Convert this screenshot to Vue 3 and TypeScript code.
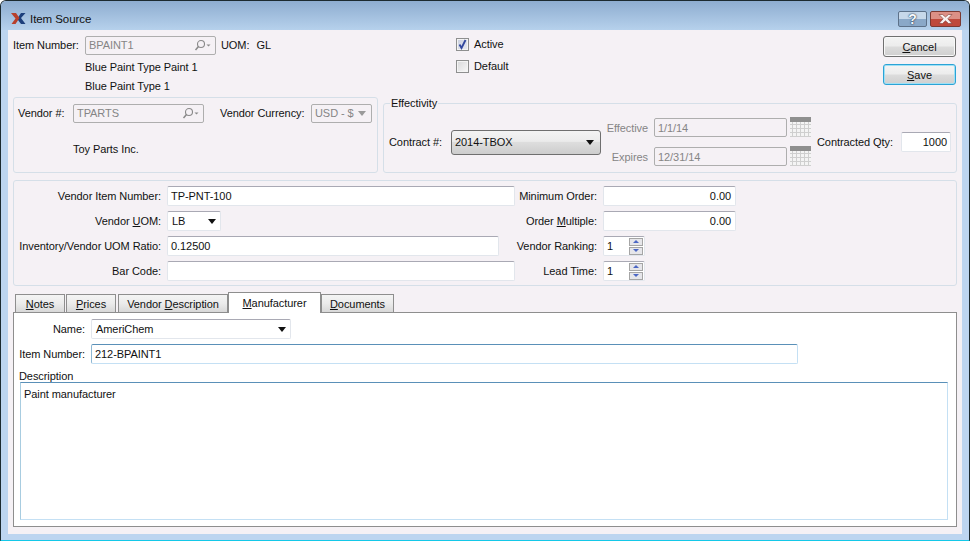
<script setup lang="ts">
const tabs = [
  { pre: '', key: 'N', post: 'otes', w: 50 },
  { pre: '', key: 'P', post: 'rices', w: 50 },
  { pre: 'Vendor ', key: 'D', post: 'escription', w: 110 },
  { pre: '', key: 'M', post: 'anufacturer', w: 93, active: true },
  { pre: '', key: 'D', post: 'ocuments', w: 73 },
]
</script>

<template>
  <div class="window">
    <header class="titlebar">
      <svg class="logo" width="15" height="11" viewBox="0 0 15 11">
        <path d="M7 4.500l3-4.500h4.500l-4.500 5 4.500 6h-4.500l-3-4z" fill="#1d3f7c" />
        <path d="M0 0h5l3.500 5-4 6h-4l4-5.500z" fill="#b8402c" />
      </svg>
      <span class="title">Item Source</span>
      <button class="cap help">?</button>
      <button class="cap close">
        <svg width="15" height="10" viewBox="0 0 15 10"><path d="M1 0.500h3.500l3 2.500 3-2.500h3.500l-4.200 4.300 4.200 4.700h-3.500l-3-2.700-3 2.700h-3.500l4.200-4.700z" fill="#f8f2f2" stroke="#7d3a34" stroke-width="0.600" /></svg>
      </button>
    </header>

    <main class="content">
      <section class="top">
        <div class="item-col">
          <div class="row item-row">
            <label class="lbl-item">Item Number:</label>
            <div class="input disabled lookup w131">
              <span>BPAINT1</span>
              <svg class="search" width="20" height="12" viewBox="0 0 20 12"><circle cx="8" cy="5" r="3.500" fill="none" stroke="#8a8a8a" stroke-width="1.100" /><path d="M5.500 7.500l-3 3.500" stroke="#8a8a8a" stroke-width="1.500" /><path d="M13.500 5.500h4l-2 2z" fill="#8a8a8a" /></svg>
            </div>
            <span class="uom">UOM:</span>
            <span class="uom-v">GL</span>
          </div>
          <div class="desc desc1">Blue Paint Type Paint 1</div>
          <div class="desc desc2">Blue Paint Type 1</div>
        </div>
        <div class="checks">
          <label class="check"><span class="box on"><svg width="11" height="11" viewBox="0 0 11 11"><path d="M2.500 5.500l2 3.500 4-8" fill="none" stroke="#31479e" stroke-width="1.800" /></svg></span>Active</label>
          <label class="check"><span class="box"></span>Default</label>
        </div>
        <div class="actions">
          <button class="btn"><u>C</u>ancel</button>
          <button class="btn default"><u>S</u>ave</button>
        </div>
      </section>

      <section class="second">
        <div class="group vendor">
          <div class="row vendor-row">
            <label class="lbl-vendor">Vendor #:</label>
            <div class="input disabled lookup w131">
              <span>TPARTS</span>
              <svg class="search" width="20" height="12" viewBox="0 0 20 12"><circle cx="8" cy="5" r="3.500" fill="none" stroke="#8a8a8a" stroke-width="1.100" /><path d="M5.500 7.500l-3 3.500" stroke="#8a8a8a" stroke-width="1.500" /><path d="M13.500 5.500h4l-2 2z" fill="#8a8a8a" /></svg>
            </div>
            <label class="lbl-cur">Vendor Currency:</label>
            <div class="input disabled combo-d"><span>USD - $</span><i class="arrow grey"></i></div>
          </div>
          <div class="vendor-name">Toy Parts Inc.</div>
        </div>
        <fieldset class="group effectivity">
          <legend>Effectivity</legend>
          <div class="eff-inner">
            <label class="lbl-contract">Contract #:</label>
            <div class="combo-strong"><span>2014-TBOX</span><i class="arrow"></i></div>
            <div class="dates">
              <div class="date-row">
                <label class="dim">Effective</label>
                <div class="input disabled date">1/1/14</div>
                <svg class="cal" width="21" height="20" viewBox="0 0 21 20"><rect width="21" height="5" fill="#8f8f8f" /><rect y="5" width="21" height="15" fill="#f4f4f4" /><g stroke="#cfcfcf"><path d="M0 7.500h21M0 11.500h21M0 15.500h21M0 19.500h21M2.500 5v15M6.500 5v15M10.500 5v15M14.500 5v15M18.500 5v15" /></g></svg>
              </div>
              <div class="date-row">
                <label class="dim">Expires</label>
                <div class="input disabled date">12/31/14</div>
                <svg class="cal" width="21" height="20" viewBox="0 0 21 20"><rect width="21" height="5" fill="#8f8f8f" /><rect y="5" width="21" height="15" fill="#f4f4f4" /><g stroke="#cfcfcf"><path d="M0 7.500h21M0 11.500h21M0 15.500h21M0 19.500h21M2.500 5v15M6.500 5v15M10.500 5v15M14.500 5v15M18.500 5v15" /></g></svg>
              </div>
            </div>
            <label class="lbl-qty">Contracted Qty:</label>
            <div class="input qty">1000</div>
          </div>
        </fieldset>
      </section>

      <section class="group main-form">
        <div class="form-col left">
          <div class="frow"><label>Vendor Item Number:</label><div class="input w348">TP-PNT-100</div></div>
          <div class="frow"><label>Vendor <u>U</u>OM:</label><div class="input combo-s"><span>LB</span><i class="arrow"></i></div></div>
          <div class="frow"><label>Inventory/Vendor UOM Ratio:</label><div class="input w332">0.12500</div></div>
          <div class="frow"><label>Bar Code:</label><div class="input w348"></div></div>
        </div>
        <div class="form-col right">
          <div class="frow"><label>Minimum Order:</label><div class="input num">0.00</div></div>
          <div class="frow"><label>Order <u>M</u>ultiple:</label><div class="input num">0.00</div></div>
          <div class="frow"><label>Vendor Ranking:</label><div class="input spin"><span>1</span><span class="spinbtns"><b class="up"></b><b class="down"></b></span></div></div>
          <div class="frow"><label>Lead Time:</label><div class="input spin"><span>1</span><span class="spinbtns"><b class="up"></b><b class="down"></b></span></div></div>
        </div>
      </section>

      <nav class="tabs">
        <div v-for="t in tabs" :key="t.post" class="tab" :class="{ active: t.active }" :style="{ width: t.w + 'px' }">{{ t.pre }}<u>{{ t.key }}</u>{{ t.post }}</div>
      </nav>
      <section class="pane">
        <div class="frow"><label>Name:</label><div class="input combo-name"><span>AmeriChem</span><i class="arrow"></i></div></div>
        <div class="frow p-item"><label>Item Number:</label><div class="input focus item-input">212-BPAINT1</div></div>
        <div class="desc-label">Description</div>
        <div class="textarea">Paint manufacturer</div>
      </section>
    </main>
  </div>
</template>

<style>
html, body { margin: 0; background: #fff; }
</style>

<style scoped>
* { box-sizing: border-box; }
.window {
  width: 970px; height: 541px; overflow: hidden;
  border: 1px solid #1c2a30; border-bottom-color: #14c8e8; border-radius: 6px 6px 0 0;
  background: #bdd5f0;
  font: 11px/14px "Liberation Sans", Arial, sans-serif; letter-spacing: -0.07px; color: #111;
  display: flex; flex-direction: column;
}
.titlebar {
  height: 29px; flex: none; display: flex; align-items: center;
  background: linear-gradient(#8eadd0, #b6d1ec);
  padding: 0 8px 0 10px;
}
.logo { flex: none; margin-top: 6px; }
.title { margin-left: 4px; margin-top: 6px; font-size: 11.500px; flex: 1; }
.cap {
  height: 16px; padding: 0; border: 1px solid #5d7189; border-radius: 2px; margin-top: 6px;
  display: flex; align-items: center; justify-content: center; font: bold 14px/14px "Liberation Sans", sans-serif;
}
.help { width: 29px; background: linear-gradient(#c7d8ea 50%, #8aa8c8 50%); color: #f6f9fc; text-shadow: 0 0 2px #22344d, 0 0 1px #22344d; }
.close { width: 31px; margin-left: 3px; border-color: #7b3a33; background: linear-gradient(#dc9086 50%, #bf4a3c 50%); }

.content {
  width: 954px; height: 504px; margin-left: 7px; flex: none;
  background: #f5f1f5; padding: 0 5px;
}
.row { display: flex; align-items: center; }
.input {
  height: 20px; display: flex; align-items: center; padding: 0 3px;
  background: #fff; border: 1px solid #e2e6ec; border-top-color: #a9a9b4; border-radius: 2px;
  white-space: nowrap; flex: none;
}
.input.disabled { background: #f5f1f5; border: 1px solid #aeaeae; color: #858585; }
.lookup { justify-content: space-between; padding-right: 0; height: 19px; }
.w131 { width: 131px; }
.search { margin-right: 2px; }

.top { height: 67px; display: flex; }
.item-col { width: 443px; flex: none; }
.item-row { margin-top: 5px; height: 20px; }
.lbl-item { width: 72px; }
.uom { margin-left: 5px; }
.uom-v { margin-left: 7px; }
.desc { margin-left: 72px; height: 14px; }
.desc1 { margin-top: 5px; }
.desc2 { margin-top: 5px; }
.checks { width: 427px; flex: none; padding-top: 7px; display: flex; flex-direction: column; gap: 8px; }
.check { display: flex; align-items: center; height: 14px; gap: 5px; }
.box {
  width: 13px; height: 13px; border: 1px solid #8e8f8f; background: linear-gradient(135deg, #d8d8da, #f8f8f8);
  box-shadow: inset 0 0 0 1px #f4f4f4; display: flex; align-items: center; justify-content: center;
}
.box.on { background: linear-gradient(135deg, #c9cfe0, #e8eaf2); }
.actions { width: 73px; flex: none; padding-top: 6px; display: flex; flex-direction: column; gap: 7px; }
.btn {
  height: 21px; width: 73px; padding: 0; border: 1px solid #707070; border-radius: 3px;
  background: linear-gradient(#f4f4f4 0%, #ececec 48%, #dcdcdc 52%, #cfcfcf 100%);
  font: 11px/14px "Liberation Sans", Arial, sans-serif; color: #111;
  box-shadow: inset 0 0 0 1px #f8f8f8;
}
.btn.default { border-color: #2ba3d6; box-shadow: inset 0 0 0 1px #9fe0f5; }

.second { display: flex; gap: 5px; height: 76px; }
.group { border: 1px solid #d5dfe8; border-radius: 3px; margin: 0; }
.vendor { width: 365px; flex: none; padding: 5px 0 0 4px; }
.vendor-row { height: 20px; }
.lbl-vendor { width: 55px; }
.lbl-cur { margin-left: 16px; width: 91px; }
.combo-d { width: 61px; justify-content: space-between; padding-right: 5px; height: 19px; }
.vendor-name { margin: 19px 0 0 55px; }
.effectivity { width: 574px; height: 76px; flex: none; padding: 0 5px; min-width: 0; }
.effectivity legend { padding: 0 1px; margin-left: 1px; line-height: 12px; font-size: 11px; }
.eff-inner { display: flex; align-items: center; height: 48px; margin-top: 9px; }
.lbl-contract { width: 62px; flex: none; }
.combo-strong {
  width: 150px; height: 25px; flex: none; display: flex; align-items: center; justify-content: space-between;
  padding: 0 6px 0 3px; border: 1px solid #6f6f6f; border-radius: 3px;
  background: linear-gradient(#f3f3f3 0%, #ebebeb 45%, #dddddd 50%, #cdcdcd 100%);
}
.arrow { width: 0; height: 0; border: 4px solid transparent; border-top: 5px solid #111; border-bottom: 0; flex: none; }
.arrow.grey { border-top-color: #9a9a9a; }
.dates { display: flex; flex-direction: column; gap: 10px; flex: none; margin-left: 4px; }
.date-row { display: flex; align-items: center; height: 19px; }
.dim { width: 43px; text-align: right; color: #858585; flex: none; }
.date { width: 133px; margin-left: 6px; height: 19px; }
.cal { margin: -1px 0 0 3px; flex: none; }
.lbl-qty { margin-left: 6px; width: 84px; flex: none; }
.qty { width: 50px; justify-content: flex-end; }

.main-form { margin-top: 7px; height: 106px; padding: 5px 0 0; display: flex; }
.form-col { display: flex; flex-direction: column; gap: 5px; }
.left { width: 502px; flex: none; }
.frow { display: flex; align-items: center; height: 20px; }
.frow label { text-align: right; flex: none; white-space: nowrap; }
.left label { width: 147px; margin-right: 6px; }
.right label { width: 81px; margin-right: 6px; }
.w348 { width: 348px; }
.w332 { width: 332px; }
.combo-s { width: 54px; justify-content: space-between; padding-right: 4px; padding-left: 4px; }
.num { width: 133px; justify-content: flex-end; padding-right: 4px; }
.spin { width: 42px; justify-content: space-between; padding: 0 1px 0 3px; }
.spinbtns { display: flex; flex-direction: column; width: 14px; height: 17px; gap: 1px; }
.spinbtns b {
  flex: 1; border: 1px solid #a5a5a5; background: #e6e6ea; display: flex; align-items: center; justify-content: center;
}
.spinbtns b::after { content: ""; border: 3px solid transparent; }
.up::after { border-bottom: 3px solid #4c67c4 !important; border-top: 0 !important; }
.down::after { border-top: 3px solid #4c67c4 !important; border-bottom: 0 !important; }

.tabs { display: flex; align-items: flex-end; height: 20px; margin-top: 6px; padding-left: 2px; gap: 0; }
.tab {
  height: 18px; flex: none; text-align: center; line-height: 19px;
  border: 1px solid #8e8e8e; border-bottom: 0; margin-right: 1px;
  background: linear-gradient(#f4f4f4, #ebebeb 50%, #d8d8d8);
}
.tab.active {
  height: 21px; background: #fff; margin: 0 0 -1px; line-height: 20px; position: relative; z-index: 1;
}
.tab:nth-child(2) { margin-right: 2px; }
.tab:nth-child(3) { margin-right: 0; }
.pane {
  width: 944px; height: 215px; background: #fff; border: 1px solid #8e8e8e;
  padding-top: 6px;
}
.pane label { width: 71px; margin-right: 6px; }
.combo-name { width: 200px; justify-content: space-between; padding-right: 4px; padding-left: 4px; }
.p-item { margin-top: 5px; }
.item-input { width: 707px; }
.focus { border: 1px solid #c4e0f4; border-top-color: #5a90b8; border-left-color: #8fb8d4; }
.desc-label { margin: 5px 0 0 5px; height: 13px; line-height: 14px; }
.textarea {
  width: 928px; height: 138px; margin-left: 6px; padding: 4px 3px;
  border: 1px solid #c4e0f4; border-top-color: #5a90b8; border-left-color: #a8cce0;
}
u { text-decoration-thickness: 1px; text-underline-offset: 1px; }
</style>
